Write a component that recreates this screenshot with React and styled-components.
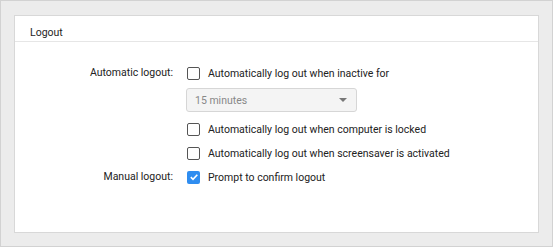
import styled, { createGlobalStyle } from 'styled-components';

const GlobalStyle = createGlobalStyle`
  html, body {
    margin: 0;
    padding: 0;
  }
  body {
    font-family: Roboto, 'Liberation Sans', sans-serif;
    color: #222;
  }
`;

const Window = styled.div`
  box-sizing: border-box;
  width: 553px;
  height: 247px;
  background: #ececec;
  border: 1px solid #d2d2d2;
  padding: 14px 13px 13px 13px;
`;

const Panel = styled.section`
  box-sizing: border-box;
  height: 100%;
  background: #fff;
  border: 1px solid #d8d8d8;
`;

const PanelHeader = styled.header`
  box-sizing: border-box;
  height: 26px;
  padding: 9px 0 0 15px;
  line-height: 16px;
  font-size: 10.5px;
  color: #1e1e1e;
  border-bottom: 1px solid #e6e6e6;
`;

const Form = styled.div`
  display: grid;
  grid-template-columns: 158px 1fr;
  column-gap: 14px;
  padding-top: 19px;
`;

const Label = styled.div`
  font-size: 10.5px;
  text-align: right;
  height: 24px;
  line-height: 24px;
`;

const Options = styled.div`
  display: flex;
  flex-direction: column;
`;

const Option = styled.label`
  display: flex;
  align-items: center;
  gap: 8px;
  height: 24px;
  font-size: 10.5px;
  color: #222;
`;

const Box = styled.span`
  box-sizing: border-box;
  width: 13px;
  height: 13px;
  border-radius: 2px;
  border: ${(p) => (p.$checked ? 'none' : '1.5px solid #555')};
  background: ${(p) => (p.$checked ? '#2f8df0' : '#fff')};
  display: flex;
  align-items: center;
  justify-content: center;
`;

const Select = styled.div`
  box-sizing: border-box;
  width: 171px;
  height: 24px;
  margin: 3px 0 5px -1px;
  border: 1px solid #d6d6d6;
  border-radius: 3px;
  background: #f4f4f4;
  color: #888;
  font-size: 10.5px;
  display: flex;
  align-items: center;
  justify-content: space-between;
  padding: 0 9px 0 8px;
`;

const Caret = styled.span`
  width: 0;
  height: 0;
  border-left: 4px solid transparent;
  border-right: 4px solid transparent;
  border-top: 4px solid #777;
`;

const Checkbox = ({ checked, children }) => (
  <Option>
    <Box $checked={checked}>
      {checked && (
        <svg width="10" height="10" viewBox="0 0 10 10">
          <path d="M1.8 5.2 L4 7.3 L8.3 2.7" fill="none" stroke="#fff" strokeWidth="1.6" />
        </svg>
      )}
    </Box>
    {children}
  </Option>
);

const App = () => (
  <>
    <GlobalStyle />
    <Window>
      <Panel>
        <PanelHeader>Logout</PanelHeader>
        <Form>
          <Label>Automatic logout:</Label>
          <Options>
            <Checkbox>Automatically log out when inactive for</Checkbox>
            <Select>
              <span>15 minutes</span>
              <Caret />
            </Select>
            <Checkbox>Automatically log out when computer is locked</Checkbox>
            <Checkbox>Automatically log out when screensaver is activated</Checkbox>
          </Options>
          <Label>Manual logout:</Label>
          <Options>
            <Checkbox checked>Prompt to confirm logout</Checkbox>
          </Options>
        </Form>
      </Panel>
    </Window>
  </>
);

export default App;
